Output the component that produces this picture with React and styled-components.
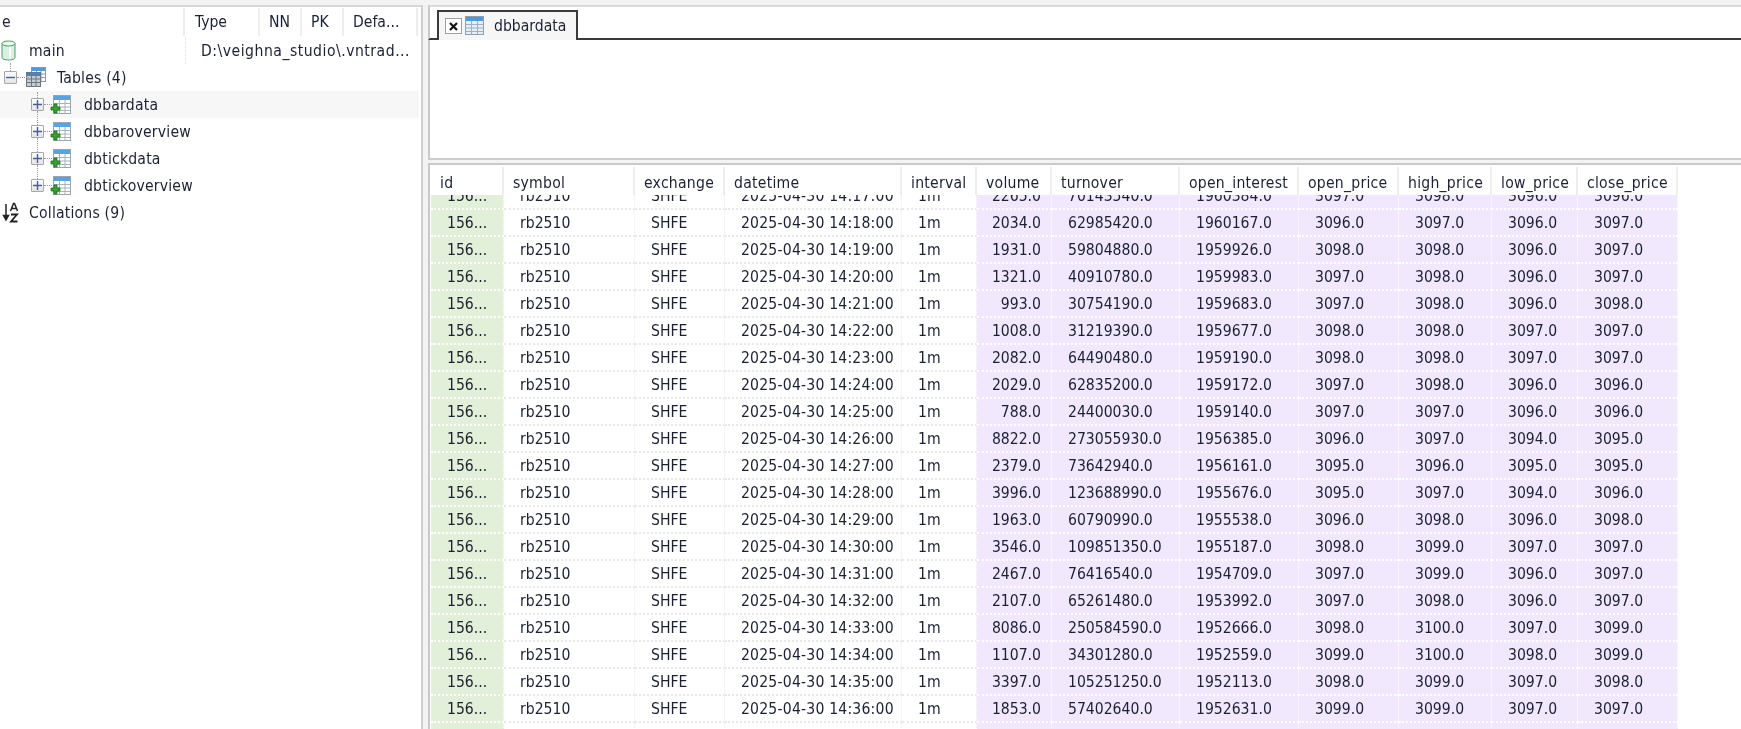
import styled, { createGlobalStyle } from "styled-components";

const GlobalStyle = createGlobalStyle`
  html, body {
    margin: 0;
    padding: 0;
    overflow: hidden;
    background: #f0f0f0;
  }
`;

const columns = "73px 131px 90px 177px 75px 75px 128px 119px 100px 93px 86px 100px";

const headers = [
  "id",
  "symbol",
  "exchange",
  "datetime",
  "interval",
  "volume",
  "turnover",
  "open_interest",
  "open_price",
  "high_price",
  "low_price",
  "close_price",
];

// minute, volume, turnover, open interest, open, high, low, close
const bars = [
  ["17", "2265.0", "70143540.0", "1960384.0", "3097.0", "3098.0", "3096.0", "3096.0"],
  ["18", "2034.0", "62985420.0", "1960167.0", "3096.0", "3097.0", "3096.0", "3097.0"],
  ["19", "1931.0", "59804880.0", "1959926.0", "3098.0", "3098.0", "3096.0", "3097.0"],
  ["20", "1321.0", "40910780.0", "1959983.0", "3097.0", "3098.0", "3096.0", "3097.0"],
  ["21", "993.0", "30754190.0", "1959683.0", "3097.0", "3098.0", "3096.0", "3098.0"],
  ["22", "1008.0", "31219390.0", "1959677.0", "3098.0", "3098.0", "3097.0", "3097.0"],
  ["23", "2082.0", "64490480.0", "1959190.0", "3098.0", "3098.0", "3097.0", "3097.0"],
  ["24", "2029.0", "62835200.0", "1959172.0", "3097.0", "3098.0", "3096.0", "3096.0"],
  ["25", "788.0", "24400030.0", "1959140.0", "3097.0", "3097.0", "3096.0", "3096.0"],
  ["26", "8822.0", "273055930.0", "1956385.0", "3096.0", "3097.0", "3094.0", "3095.0"],
  ["27", "2379.0", "73642940.0", "1956161.0", "3095.0", "3096.0", "3095.0", "3095.0"],
  ["28", "3996.0", "123688990.0", "1955676.0", "3095.0", "3097.0", "3094.0", "3096.0"],
  ["29", "1963.0", "60790990.0", "1955538.0", "3096.0", "3098.0", "3096.0", "3098.0"],
  ["30", "3546.0", "109851350.0", "1955187.0", "3098.0", "3099.0", "3097.0", "3097.0"],
  ["31", "2467.0", "76416540.0", "1954709.0", "3097.0", "3099.0", "3096.0", "3097.0"],
  ["32", "2107.0", "65261480.0", "1953992.0", "3097.0", "3098.0", "3096.0", "3097.0"],
  ["33", "8086.0", "250584590.0", "1952666.0", "3098.0", "3100.0", "3097.0", "3099.0"],
  ["34", "1107.0", "34301280.0", "1952559.0", "3099.0", "3100.0", "3098.0", "3099.0"],
  ["35", "3397.0", "105251250.0", "1952113.0", "3098.0", "3099.0", "3097.0", "3098.0"],
  ["36", "1853.0", "57402640.0", "1952631.0", "3099.0", "3099.0", "3097.0", "3097.0"],
  ["37", "1440.0", "44582400.0", "1952410.0", "3097.0", "3098.0", "3096.0", "3096.0"],
];

const Page = styled.div`
  width: 1741px;
  height: 729px;
  overflow: hidden;
  display: flex;
  gap: 5px;
  padding-top: 5px;
  box-sizing: border-box;
  background: #f3f3f3;
  font-family: "DejaVu Sans Condensed", "DejaVu Sans", sans-serif;
  font-stretch: condensed;
  font-size: 15.6px;
  color: #1c2033;
  filter: blur(0.4px);
`;

const Sidebar = styled.aside`
  width: 423px;
  flex: none;
  box-sizing: border-box;
  background: #fff;
  border-top: 2px solid #d6d6d6;
  border-right: 2px solid #cfcfcf;
`;

const TreeHeader = styled.div`
  display: grid;
  grid-template-columns: 185px 75px 42px 42px 74px;
  height: 29px;
  margin-bottom: 1px;
`;

const TreeHeaderCell = styled.div`
  display: flex;
  align-items: center;
  padding-left: ${(props) => props.$pad}px;
  border-right: 2px solid #eeeeee;
  margin-top: 1px;
`;

const TreeRow = styled.div`
  position: relative;
  display: flex;
  align-items: center;
  height: 27px;
  padding-left: ${(props) => props.$indent}px;
  background: ${(props) => (props.$active ? "#f7f7f7" : "transparent")};
  width: 419px;
  box-sizing: border-box;
`;

const TreeLabel = styled.span`
  margin-left: ${(props) => props.$gap}px;
  letter-spacing: 0.2px;
  white-space: nowrap;
`;

const PathCell = styled.span`
  position: absolute;
  left: 185px;
  top: 0;
  height: 27px;
  display: flex;
  align-items: center;
  padding-left: 15px;
  border-left: 1px dotted #dddddd;
  letter-spacing: 0.5px;
  white-space: nowrap;
`;

const Toggle = styled.span`
  position: relative;
  flex: none;
  width: 13px;
  height: 13px;
  box-sizing: border-box;
  display: flex;
  align-items: center;
  justify-content: center;
  border: 1px solid #a8a8a8;
  border-radius: 1px;
  background: linear-gradient(#ffffff, #e4e4e4);
  color: #4a5f96;
  &::after {
    content: "";
    position: absolute;
    left: 12px;
    top: 5px;
    width: ${(props) => props.$tail}px;
    border-top: 1px dotted #9a9a9a;
  }
  &::before {
    content: "";
    position: absolute;
    left: 5px;
    top: ${(props) => props.$above}px;
    height: ${(props) => props.$line}px;
    border-left: 1px dotted #9a9a9a;
  }
`;

const ToggleGap = styled.span`
  flex: none;
  width: ${(props) => props.$width}px;
`;

const Main = styled.main`
  flex: 1;
  min-width: 0;
  display: flex;
  flex-direction: column;
`;

const TabBar = styled.div`
  height: 35px;
  flex: none;
  box-sizing: border-box;
  background: #fff;
  border-top: 2px solid #d9d9d9;
  border-left: 2px solid #c9c9c9;
  border-bottom: 2px solid #3a3a3a;
  padding-left: 7px;
  padding-top: 3px;
`;

const Tab = styled.div`
  display: flex;
  align-items: center;
  width: 141px;
  height: 30px;
  box-sizing: border-box;
  background: #f6f6f6;
  border: 2px solid #3a3a3a;
  border-bottom: none;
  padding-left: 6px;
`;

const TabTitle = styled.span`
  margin-left: 9px;
`;

const CloseBox = styled.span`
  flex: none;
  width: 17px;
  height: 16px;
  box-sizing: border-box;
  border: 1px solid #a0a0a0;
  background: #fff;
  display: flex;
  align-items: center;
  justify-content: center;
  color: #111;
  margin-right: 3px;
`;

const Editor = styled.div`
  height: 120px;
  flex: none;
  box-sizing: border-box;
  background: #fff;
  border-left: 2px solid #c9c9c9;
  border-bottom: 2px solid #cdcdcd;
`;

const Results = styled.section`
  flex: 1;
  min-height: 0;
  margin-top: 3px;
  display: flex;
  flex-direction: column;
  background: #fff;
  border-top: 2px solid #c9c9c9;
  border-left: 2px solid #c9c9c9;
  overflow: hidden;
`;

const HeaderRow = styled.div`
  display: grid;
  grid-template-columns: ${columns};
  width: max-content;
  height: 28px;
  flex: none;
  margin: 2px 0 0 1px;
  position: relative;
  z-index: 1;
  background: #fff;
`;

const HeaderCell = styled.div`
  display: flex;
  align-items: center;
  padding: 3px 0 0 9px;
  box-sizing: border-box;
  border-right: 2px solid #eeeeee;
  letter-spacing: 0.25px;
  white-space: nowrap;
`;

const RowsViewport = styled.div`
  flex: 1;
  min-height: 0;
  overflow: hidden;
`;

const Rows = styled.div`
  margin-top: -12px;
  margin-left: 1px;
`;

const DataRow = styled.div`
  display: grid;
  grid-template-columns: ${columns};
  width: max-content;
  height: 27px;
`;

const tones = {
  key: "#e2efd9",
  text: "#ffffff",
  number: "#f1e8fe",
};

const DataCell = styled.div`
  display: flex;
  align-items: center;
  justify-content: ${(props) => (props.$right ? "flex-end" : "flex-start")};
  box-sizing: border-box;
  padding: 0 ${(props) => (props.$right ? "10px" : "0")} 0 ${(props) => (props.$right ? "0" : "16px")};
  background: ${(props) => tones[props.$tone]};
  border-right: 1px dotted ${(props) => (props.$tone === "text" ? "#eaeaea" : "#ffffff")};
  border-bottom: 2px dotted ${(props) => (props.$tone === "text" ? "#e8e8e8" : "#ffffff")};
  white-space: nowrap;
`;

const DateCell = styled(DataCell)`
  letter-spacing: 0.2px;
`;

const DatabaseIcon = () => (
  <svg width="17" height="21" viewBox="0 0 17 21" style={{ flex: "none" }}>
    <path d="M2 3.5v14c0 1.5 3 2.5 6.5 2.5s6.500-1 6.500-2.500v-14z" fill="#d9f0df" stroke="#4f9a6c" />
    <path d="M10 5v14" stroke="#ffffff" strokeWidth="2" />
    <ellipse cx="8.500" cy="3.500" rx="6.500" ry="2.500" fill="#eef8f0" stroke="#4f9a6c" />
  </svg>
);

const GridPart = ({ x, y }) => (
  <g transform={`translate(${x} ${y})`}>
    <rect x="0.5" y="0.5" width="14" height="14" fill="#fff" stroke="#8a96a6" />
    <rect x="1" y="1" width="13" height="3" fill="#4a9be0" />
    <path d="M1 7h13M1 10.500h13M5.500 4v10M10 4v10" stroke="#8a96a6" />
  </g>
);

const TablesIcon = () => (
  <svg width="20" height="21" viewBox="0 0 20 21" style={{ flex: "none" }}>
    <GridPart x={5} y={0} />
    <g transform="translate(0 5)">
      <rect x="0.500" y="0.500" width="14" height="14" fill="#c6ccd4" stroke="#6d7683" />
      <rect x="1" y="1" width="13" height="3" fill="#5a7fa8" />
      <path d="M1 7h13M1 10.500h13M5.500 4v10M10 4v10" stroke="#6d7683" />
    </g>
  </svg>
);

const TableAddIcon = () => (
  <svg width="22" height="21" viewBox="0 0 22 21" style={{ flex: "none" }}>
    <rect x="3.500" y="1.500" width="17" height="18" fill="#fff" stroke="#9aa5b1" />
    <rect x="4" y="2" width="16" height="4" fill="#55a5e6" />
    <path d="M4 9.500h16M4 13h16M4 16.500h16M9.500 6v13M15 6v13" stroke="#a8b2bd" />
    <path d="M4 10h3v3h3v3h-3v3h-3v-3h-3v-3h3z" fill="#35a12e" stroke="#1c6e1a" strokeWidth="0.8" />
  </svg>
);

const TabTableIcon = () => (
  <svg width="20" height="20" viewBox="0 0 20 20" style={{ flex: "none" }}>
    <rect x="0.500" y="0.500" width="18" height="18" fill="#e6edf5" stroke="#8ea0b5" />
    <rect x="1" y="1" width="17" height="4" fill="#4a9be0" />
    <path d="M1 8.500h17M1 12h17M1 15.500h17M6.500 5v13M12.500 5v13" stroke="#9fb0c2" />
  </svg>
);

const SortIcon = () => (
  <svg width="18" height="22" viewBox="0 0 18 22" style={{ flex: "none" }}>
    <path d="M4 2v15M1.500 13.500 4 18l2.500-4.500z" stroke="#222" strokeWidth="1.500" fill="#222" />
    <path d="M8.500 9 11.500 1.500h1L15.500 9M10 6.500h4" stroke="#222" strokeWidth="1.500" fill="none" />
    <path d="M9 12.500h6l-6 7h6.500" stroke="#222" strokeWidth="1.800" fill="none" />
  </svg>
);

const PlusMinus = ({ plus }) => (
  <svg width="9" height="9" viewBox="0 0 9 9">
    <path d={plus ? "M0 4.500h9M4.500 0v9" : "M0 4.500h9"} stroke="currentColor" strokeWidth="1.400" />
  </svg>
);

const CloseGlyph = () => (
  <svg width="9" height="9" viewBox="0 0 9 9">
    <path d="M1 1l7 7M8 1L1 8" stroke="currentColor" strokeWidth="2.200" />
  </svg>
);

const tables = ["dbbardata", "dbbaroverview", "dbtickdata", "dbtickoverview"];

export default function App() {
  return (
    <>
      <GlobalStyle />
      <Page>
        <Sidebar>
          <TreeHeader>
            <TreeHeaderCell $pad={2}>e</TreeHeaderCell>
            <TreeHeaderCell $pad={10}>Type</TreeHeaderCell>
            <TreeHeaderCell $pad={9}>NN</TreeHeaderCell>
            <TreeHeaderCell $pad={9}>PK</TreeHeaderCell>
            <TreeHeaderCell $pad={9}>Defa...</TreeHeaderCell>
          </TreeHeader>
          <TreeRow $indent={0}>
            <DatabaseIcon />
            <TreeLabel $gap={12}>main</TreeLabel>
            <PathCell>D:\veighna_studio\.vntrad...</PathCell>
          </TreeRow>
          <TreeRow $indent={4}>
            <Toggle $tail={12} $above={-9} $line={8}>
              <PlusMinus />
            </Toggle>
            <ToggleGap $width={9} />
            <TablesIcon />
            <TreeLabel $gap={11}>Tables (4)</TreeLabel>
          </TreeRow>
          {tables.map((name, i) => (
            <TreeRow key={name} $indent={31} $active={i === 0}>
              <Toggle $tail={8} $above={i === 0 ? -7 : -15} $line={i === 0 ? 6 : 14}>
                <PlusMinus plus />
              </Toggle>
              <ToggleGap $width={6} />
              <TableAddIcon />
              <TreeLabel $gap={12}>{name}</TreeLabel>
            </TreeRow>
          ))}
          <TreeRow $indent={2}>
            <SortIcon />
            <TreeLabel $gap={9}>Collations (9)</TreeLabel>
          </TreeRow>
        </Sidebar>
        <Main>
          <TabBar>
            <Tab>
              <CloseBox>
                <CloseGlyph />
              </CloseBox>
              <TabTableIcon />
              <TabTitle>dbbardata</TabTitle>
            </Tab>
          </TabBar>
          <Editor />
          <Results>
            <HeaderRow>
              {headers.map((title) => (
                <HeaderCell key={title}>{title}</HeaderCell>
              ))}
            </HeaderRow>
            <RowsViewport>
              <Rows>
                {bars.map(([minute, volume, turnover, oi, open, high, low, close]) => (
                  <DataRow key={minute}>
                    <DataCell $tone="key">156...</DataCell>
                    <DataCell $tone="text">rb2510</DataCell>
                    <DataCell $tone="text">SHFE</DataCell>
                    <DateCell $tone="text">{`2025-04-30 14:${minute}:00`}</DateCell>
                    <DataCell $tone="text">1m</DataCell>
                    <DataCell $tone="number" $right>{volume}</DataCell>
                    <DataCell $tone="number">{turnover}</DataCell>
                    <DataCell $tone="number">{oi}</DataCell>
                    <DataCell $tone="number">{open}</DataCell>
                    <DataCell $tone="number">{high}</DataCell>
                    <DataCell $tone="number">{low}</DataCell>
                    <DataCell $tone="number">{close}</DataCell>
                  </DataRow>
                ))}
              </Rows>
            </RowsViewport>
          </Results>
        </Main>
      </Page>
    </>
  );
}
